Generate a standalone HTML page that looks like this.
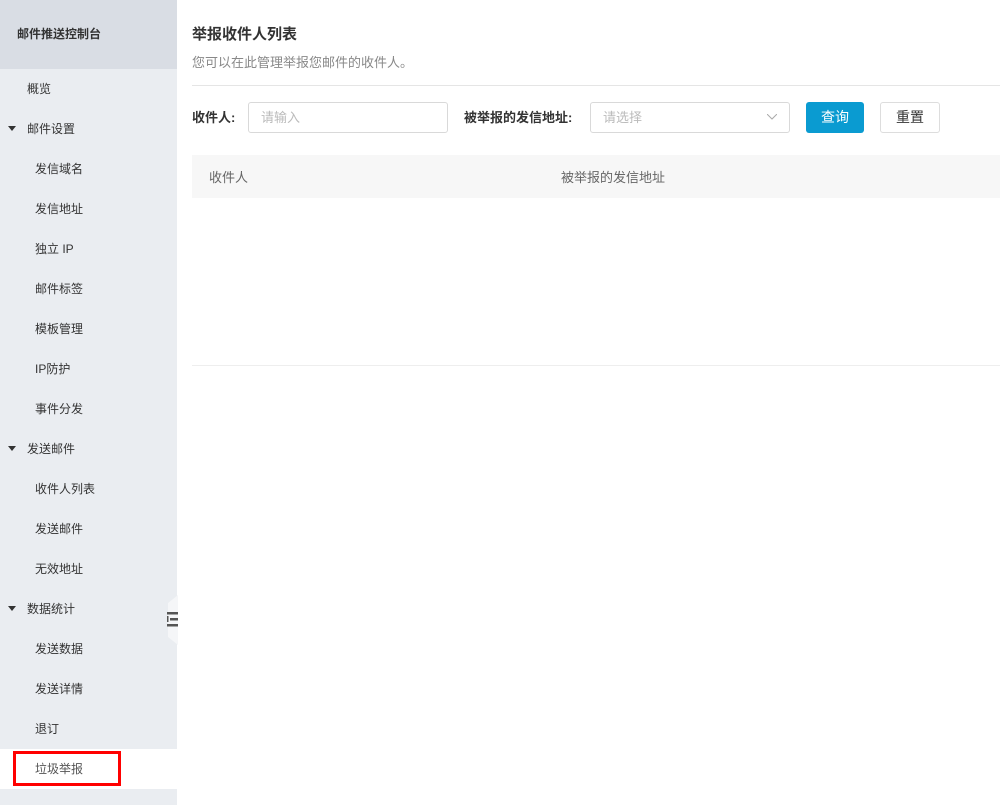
<!DOCTYPE html><html><head><meta charset="utf-8"><style>
body{margin:0;width:1000px;height:805px;font-family:"Liberation Sans","Noto Sans CJK SC",sans-serif;background:#fff;position:relative;overflow:hidden;color:#333}
.sb{position:absolute;left:0;top:0;width:177px;height:805px;background:#eaedf1}
.hd{position:absolute;left:0;top:0;width:177px;height:69px;background:#d9dde4;font-size:12px;font-weight:bold;color:#333;line-height:69px;padding-left:17px;box-sizing:border-box}
.it{position:absolute;left:0;width:177px;height:40px;line-height:41px;font-size:12px;color:#333}
.tri{position:absolute;left:8px;top:17px;width:0;height:0;border-left:4px solid transparent;border-right:4px solid transparent;border-top:5px solid #333}
.a{position:absolute;font-size:13px}
.inp{position:absolute;top:102px;height:31px;border:1px solid #d9d9d9;border-radius:3px;box-sizing:border-box;font-size:13px;color:#bbb;line-height:29px;padding-left:12px}
</style></head><body>
<div class="sb">
<div class="hd">邮件推送控制台</div>
<div class="it" style="top:69px;padding-left:27px;box-sizing:border-box">概览</div>
<div class="it" style="top:109px;padding-left:27px;box-sizing:border-box"><span class="tri"></span>邮件设置</div>
<div class="it" style="top:149px;padding-left:35px;box-sizing:border-box">发信域名</div>
<div class="it" style="top:189px;padding-left:35px;box-sizing:border-box">发信地址</div>
<div class="it" style="top:229px;padding-left:35px;box-sizing:border-box">独立 IP</div>
<div class="it" style="top:269px;padding-left:35px;box-sizing:border-box">邮件标签</div>
<div class="it" style="top:309px;padding-left:35px;box-sizing:border-box">模板管理</div>
<div class="it" style="top:349px;padding-left:35px;box-sizing:border-box">IP防护</div>
<div class="it" style="top:389px;padding-left:35px;box-sizing:border-box">事件分发</div>
<div class="it" style="top:429px;padding-left:27px;box-sizing:border-box"><span class="tri"></span>发送邮件</div>
<div class="it" style="top:469px;padding-left:35px;box-sizing:border-box">收件人列表</div>
<div class="it" style="top:509px;padding-left:35px;box-sizing:border-box">发送邮件</div>
<div class="it" style="top:549px;padding-left:35px;box-sizing:border-box">无效地址</div>
<div class="it" style="top:589px;padding-left:27px;box-sizing:border-box"><span class="tri"></span>数据统计</div>
<div class="it" style="top:629px;padding-left:35px;box-sizing:border-box">发送数据</div>
<div class="it" style="top:669px;padding-left:35px;box-sizing:border-box">发送详情</div>
<div class="it" style="top:709px;padding-left:35px;box-sizing:border-box">退订</div>
<div class="it" style="top:749px;padding-left:35px;box-sizing:border-box;background:#fff;color:#555">垃圾举报</div>
<div style="position:absolute;left:13px;top:751px;width:108px;height:35px;border:3px solid #f00;box-sizing:border-box"></div>
</div>
<svg style="position:absolute;left:162px;top:595px" width="16" height="50"><polygon points="16,0 16,50 6,42 6,8" fill="#f5f6f8"/><rect x="5" y="17" width="11" height="2.5" fill="#555"/><rect x="8" y="23" width="8" height="2.5" fill="#555"/><rect x="5" y="29" width="11" height="2.5" fill="#555"/><rect x="5" y="21" width="1.5" height="6" fill="#555"/></svg>
<div class="a" style="left:192px;top:23px;font-size:15px;font-weight:bold;color:#333">举报收件人列表</div>
<div class="a" style="left:192px;top:52px;color:#888">您可以在此管理举报您邮件的收件人。</div>
<div style="position:absolute;left:192px;top:85px;width:808px;height:1px;background:#e5e5e5"></div>
<div class="a" style="left:192px;top:107px;font-weight:bold;color:#333">收件人:</div>
<div class="inp" style="left:248px;width:200px">请输入</div>
<div class="a" style="left:464px;top:107px;font-weight:bold;color:#333">被举报的发信地址:</div>
<div class="inp" style="left:590px;width:200px">请选择<svg style="position:absolute;right:12px;top:11px" width="10" height="6"><polyline points="0,0 5,5 10,0" fill="none" stroke="#aaa" stroke-width="1"/></svg></div>
<div style="position:absolute;left:806px;top:102px;width:58px;height:31px;background:#0a9bd1;border-radius:3px;color:#fff;font-size:14px;line-height:31px;text-align:center">查询</div>
<div style="position:absolute;left:880px;top:102px;width:60px;height:31px;border:1px solid #ddd;box-sizing:border-box;border-radius:3px;color:#333;font-size:14px;line-height:29px;text-align:center">重置</div>
<div style="position:absolute;left:192px;top:155px;width:808px;height:43px;background:#f7f7f7"></div>
<div class="a" style="left:209px;top:167px;color:#666">收件人</div>
<div class="a" style="left:561px;top:167px;color:#666">被举报的发信地址</div>
<div style="position:absolute;left:192px;top:365px;width:808px;height:1px;background:#eee"></div>
</body></html>
